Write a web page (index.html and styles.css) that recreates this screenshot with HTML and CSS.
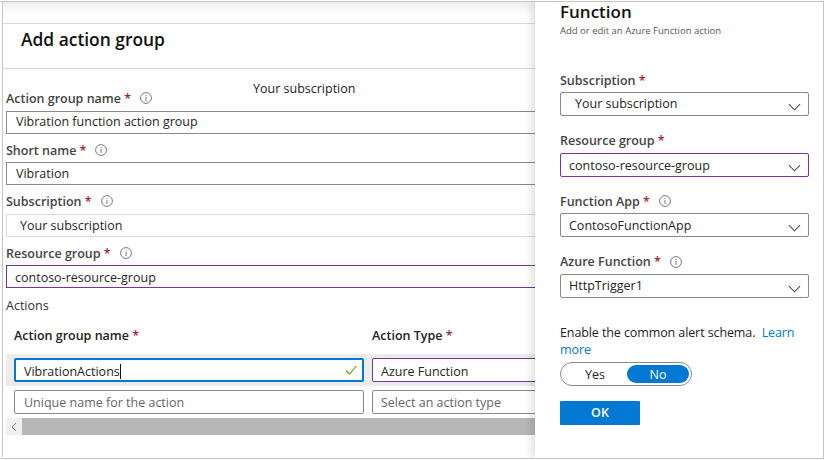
FILE: index.html
```html
<!DOCTYPE html>
<html lang="en">
<head>
    <meta charset="UTF-8">
    <meta name="viewport" content="width=device-width, initial-scale=1.0">
    <title>Add action group</title>
    <link rel="stylesheet" href="styles.css">
</head>
<body>
    <svg width="0" height="0" class="defs">
        <symbol id="info" viewBox="0 0 12 12">
            <circle cx="6" cy="6" r="5.4" fill="none" stroke="#7a7a7a"/>
            <path d="M6 5v4M6 3v1.1" fill="none" stroke="#7a7a7a"/>
        </symbol>
        <symbol id="chev" viewBox="0 0 14 8">
            <path d="M1 1l6 6 6-6" fill="none" stroke="#444" stroke-width="1.1"/>
        </symbol>
    </svg>
    <div class="window">
        <div class="top_strip"></div>
        <h1 class="page_title">Add action group</h1>
        <div class="form">
            <div class="floating_sub">Your subscription</div>
            <div class="label">Action group name <span class="req">*</span><svg class="info"><use href="#info"/></svg></div>
            <div class="input input_name">Vibration function action group</div>
            <div class="label">Short name <span class="req">*</span><svg class="info"><use href="#info"/></svg></div>
            <div class="input input_short">Vibration</div>
            <div class="label">Subscription <span class="req">*</span><svg class="info"><use href="#info"/></svg></div>
            <div class="input input_light">Your subscription</div>
            <div class="label">Resource group <span class="req">*</span><svg class="info"><use href="#info"/></svg></div>
            <div class="input input_purple">contoso-resource-group</div>
            <div class="actions_title">Actions</div>
            <div class="actions_head">
                <div class="col_name">Action group name <span class="req">*</span></div>
                <div>Action Type <span class="req">*</span></div>
            </div>
            <div class="action_row action_row_on">
                <div class="cell cell_focus"><span>VibrationActions</span><i class="caret"></i>
                    <svg class="check" viewBox="0 0 12 10"><path d="M1 5.5l3.5 3.5L11.500 1" fill="none" stroke="#57a300" stroke-width="1.1"/></svg>
                </div>
                <div class="cell cell_type cell_purple">Azure Function</div>
            </div>
            <div class="action_row">
                <div class="cell cell_empty">Unique name for the action</div>
                <div class="cell cell_type cell_empty">Select an action type</div>
            </div>
            <div class="scrollbar">
                <div class="scroll_btn"><svg width="6" height="10" viewBox="0 0 6 10"><path d="M5 1L1 5l4 4" fill="none" stroke="#777"/></svg></div>
                <div class="scroll_thumb"></div>
            </div>
        </div>

        <div class="panel">
            <h2 class="panel_title">Function</h2>
            <p class="panel_sub">Add or edit an Azure Function action</p>

            <div class="field first">
                <div class="label">Subscription <span class="req">*</span></div>
                <div class="select sub_select">Your subscription<svg class="chev"><use href="#chev"/></svg></div>
            </div>
            <div class="field">
                <div class="label">Resource group <span class="req">*</span></div>
                <div class="select select_low select_purple">contoso-resource-group<svg class="chev"><use href="#chev"/></svg></div>
            </div>
            <div class="field">
                <div class="label">Function App <span class="req">*</span><svg class="info"><use href="#info"/></svg></div>
                <div class="select select_low">ContosoFunctionApp<svg class="chev"><use href="#chev"/></svg></div>
            </div>
            <div class="field">
                <div class="label">Azure Function <span class="req">*</span><svg class="info"><use href="#info"/></svg></div>
                <div class="select">HttpTrigger1<svg class="chev"><use href="#chev"/></svg></div>
            </div>

            <p class="schema">Enable the common alert schema.&nbsp; <a href="#">Learn</a> <a href="#">more</a></p>
            <div class="toggle">
                <div class="toggle_opt">Yes</div>
                <div class="toggle_opt toggle_on">No</div>
            </div>
            <button class="ok">OK</button>
        </div>
    </div>
</body>
</html>
```

FILE: styles.css
```css
html, body {
    margin: 0;
    padding: 0;
}
body {
    width: 825px;
    height: 460px;
    overflow: hidden;
    background: white;
    font-family: "Open Sans", "Noto Sans", sans-serif;
    font-size: 12.5px;
    color: #252525;
}
.defs {
    position: absolute;
}
.window {
    position: relative;
    box-sizing: border-box;
    width: 824px;
    height: 458px;
    margin-top: 1px;
    border: 1px solid #c4c4c4;
    border-width: 1px 1px 1px 0;
    overflow: hidden;
}
.top_strip {
    height: 21px;
    margin-left: 2px;
    border-left: 1px solid #c4c4c4;
    border-bottom: 1px solid #d8d8d8;
    background: linear-gradient(#eeeeee, #ffffff 60%);
}
.page_title {
    box-sizing: border-box;
    height: 45px;
    margin: 0 0 0 2px;
    padding: 0 0 0 18px;
    border-left: 1px solid #c4c4c4;
    border-bottom: 1px solid #d8d8d8;
    font-size: 17.4px;
    line-height: 30px;
    font-weight: 600;
    color: #111;
}
.form {
    position: relative;
    box-sizing: border-box;
    height: 388px;
    margin-left: 2px;
    padding: 20px 0 0 3px;
    border-left: 1px solid #c4c4c4;
}
.floating_sub {
    position: absolute;
    top: 11px;
    left: 250px;
    line-height: 18px;
    color: #222;
}
.label {
    display: flex;
    align-items: center;
    height: 18px;
    font-weight: 600;
    color: #444;
    white-space: pre;
}
.req {
    color: #a4262c;
}
.info {
    width: 12px;
    height: 12px;
    margin-left: 9px;
}
.input {
    box-sizing: border-box;
    width: 640px;
    height: 23px;
    margin: 4px 0 6px;
    padding-left: 9px;
    border: 1px solid #8a8a8a;
    line-height: 20px;
}
.input_name {
    margin-bottom: 7px;
}
.input_short {
    margin-top: 3px;
    margin-bottom: 7px;
    line-height: 22px;
}
.input_light {
    padding-left: 13px;
    border-color: #d9d9d9;
    margin-bottom: 7px;
    line-height: 22px;
}
.input_purple {
    margin-top: 3px;
    margin-bottom: 7px;
    padding-left: 8px;
    border-color: #7f2f9e;
    line-height: 24px;
}
.actions_title {
    height: 21px;
    line-height: 21px;
    color: #333;
}
.actions_head {
    display: flex;
    height: 18px;
    margin-top: 11px;
    padding-left: 8px;
    line-height: 18px;
    font-weight: 600;
    color: #222;
}
.col_name {
    width: 358px;
}
.action_row {
    display: flex;
    gap: 8px;
    height: 32px;
    padding: 4px 0 0 8px;
    box-sizing: border-box;
}
.action_row_on {
    margin-top: 9px;
    background: #ececec;
}
.action_row_on .cell {
    padding-top: 2px;
}
.action_row + .action_row {
    height: 31px;
}
.cell {
    display: flex;
    align-items: center;
    box-sizing: border-box;
    position: relative;
    width: 350px;
    height: 24px;
    padding-left: 9px;
    border-radius: 2px;
    background: white;
}
.cell_type {
    width: 300px;
    padding-left: 8px;
}
.cell_focus {
    border: 2px solid #0078d4;
    padding-left: 8px;
}
.cell_purple {
    border: 1px solid #7f2f9e;
}
.cell_empty {
    border: 1px solid #8a8a8a;
    color: #666;
}
.caret {
    width: 1px;
    height: 15px;
    background: #111;
}
.check {
    position: absolute;
    right: 5px;
    top: 5px;
    width: 12px;
    height: 10px;
}
.scrollbar {
    display: flex;
    height: 17px;
    margin-top: 1px;
    background: #b7b7b7;
}
.scroll_btn {
    display: flex;
    align-items: center;
    justify-content: center;
    width: 16px;
    background: #f0f0f0;
}
.panel {
    position: absolute;
    top: 0;
    right: 0;
    bottom: 0;
    box-sizing: border-box;
    width: 288px;
    padding: 0 14px 0 25px;
    background: white;
    box-shadow: -4px 0 8px rgba(0,0,0,0.12);
}
.panel_title {
    margin: 0;
    height: 20px;
    font-size: 17px;
    line-height: 20px;
    font-weight: 600;
    color: #111;
}
.panel_sub {
    margin: 0;
    padding-top: 1px;
    font-size: 9.5px;
    line-height: 15px;
    color: #555;
}
.field {
    margin-bottom: 15.5px;
}
.field.first {
    margin-top: 33px;
}
.field .label {
    height: 18px;
    margin-bottom: 3px;
}
.select {
    position: relative;
    box-sizing: border-box;
    height: 24px;
    padding-left: 8px;
    border: 1px solid #8a8a8a;
    border-radius: 2px;
    line-height: 22px;
}
.select_low {
    line-height: 24px;
}
.sub_select {
    padding-left: 14px;
}
.select_purple {
    border-color: #7f2f9e;
}
.chev {
    position: absolute;
    right: 7px;
    top: 10px;
    width: 13px;
    height: 8px;
}
.schema {
    width: 250px;
    margin: 26px 0 0;
    line-height: 17px;
    color: #222;
    letter-spacing: -0.1px;
}
.schema a {
    color: #0078d4;
    text-decoration: none;
}
.toggle {
    display: flex;
    box-sizing: border-box;
    width: 132px;
    height: 24px;
    margin-top: 4px;
    padding: 2px 2px;
    border: 1px solid #8a8a8a;
    border-radius: 12px;
}
.toggle_opt {
    flex: 1;
    height: 18px;
    text-align: center;
    line-height: 20px;
}
.toggle_on {
    flex: none;
    width: 62px;
    border-radius: 9px;
    background: #0078d4;
    color: white;
}
.ok {
    display: block;
    width: 80px;
    height: 24px;
    margin-top: 15px;
    padding: 0;
    border: 0;
    border-radius: 1px;
    background: #0078d4;
    color: white;
    font: 600 12.5px "Open Sans", "Noto Sans", sans-serif;
}
```
